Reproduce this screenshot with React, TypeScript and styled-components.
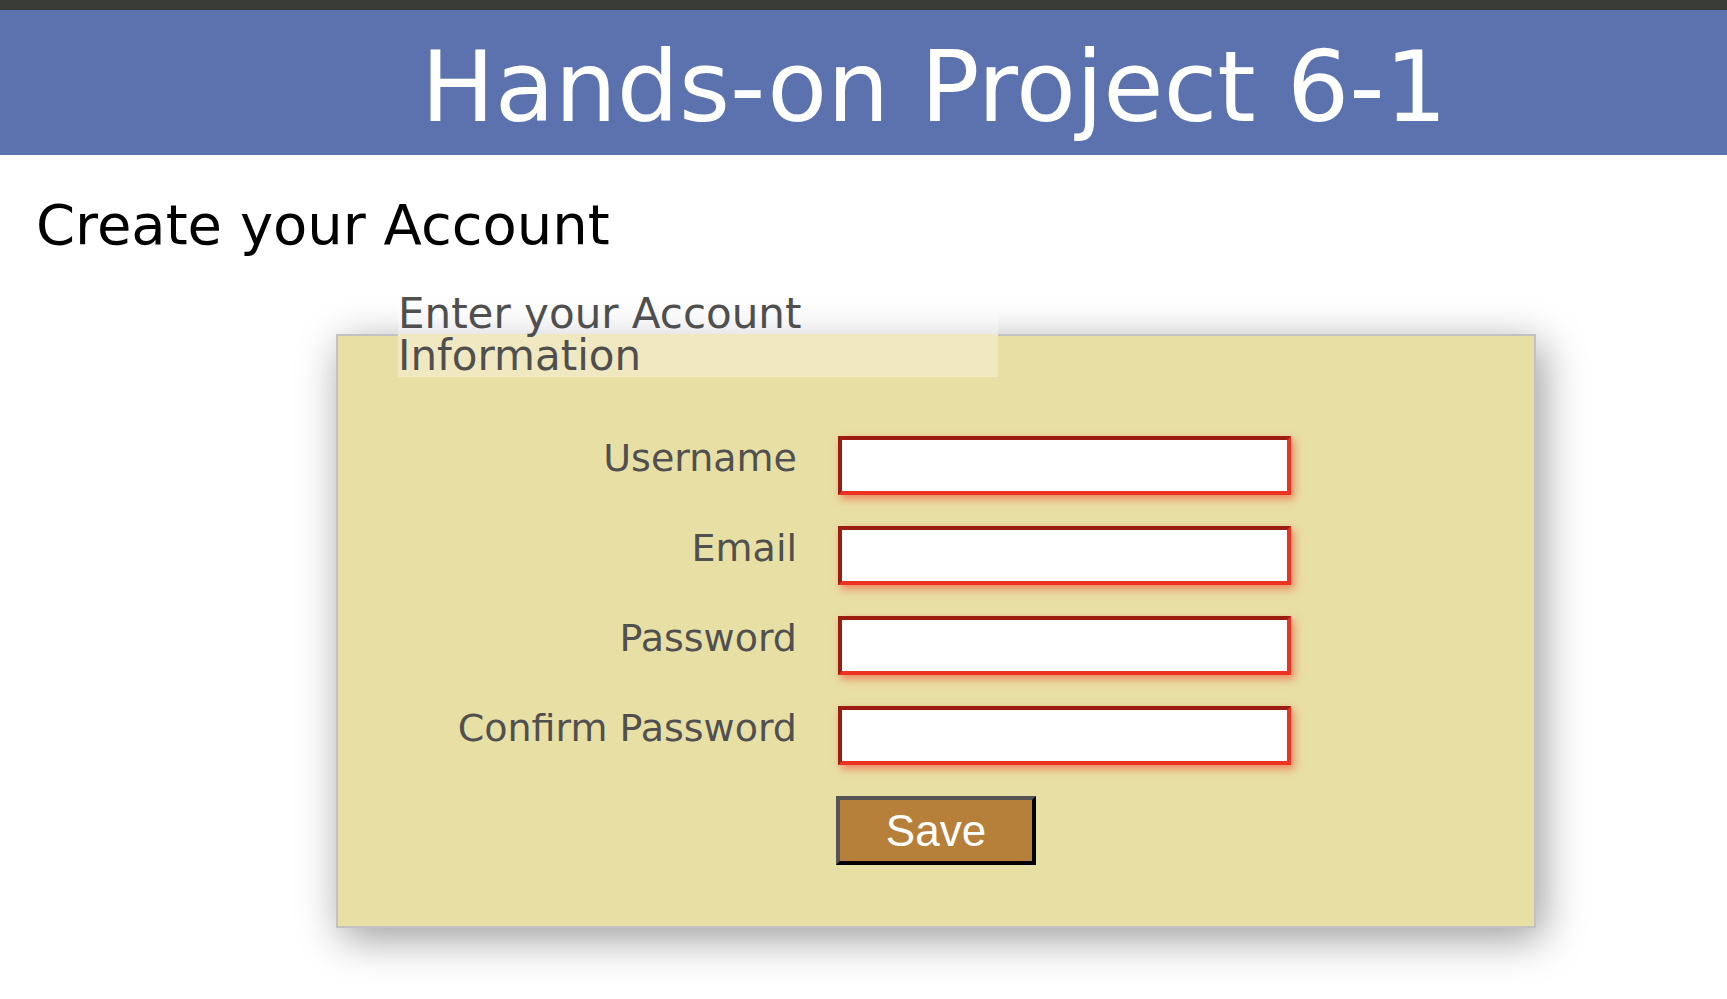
import React from 'react';
import styled, { createGlobalStyle } from 'styled-components';

// Global reset
const GlobalStyle = createGlobalStyle`
  html, body {
    margin: 0;
    padding: 0;
    background: #ffffff;
  }

  body {
    font-family: "DejaVu Sans", Verdana, sans-serif;
  }

  * {
    box-sizing: border-box;
  }
`;

// Styled Components
const TopStrip = styled.div`
  height: 10px;
  background: #393d36;
`;

const Header = styled.header`
  height: 145px;
  background: #5b72ae;
  padding: 21px 0 0 141px;
  text-align: center;
`;

const HeaderTitle = styled.h1`
  margin: 0;
  font-family: "DejaVu Sans", Verdana, sans-serif;
  font-size: 98px;
  font-weight: normal;
  line-height: 112px;
  color: #ffffff;
  white-space: nowrap;
`;

const PageTitle = styled.h2`
  margin: 37px 0 0 0;
  padding-left: 36px;
  font-family: "DejaVu Sans", Verdana, sans-serif;
  font-size: 56px;
  font-weight: normal;
  color: #000000;
`;

const AccountForm = styled.form`
  margin: 36px 0 60px 0;
`;

const FormFieldset = styled.fieldset`
  width: 1200px;
  margin: 0 0 0 336px;
  padding: 0 60px 61px 60px;
  background: #e8dfa5;
  border: 2px solid #c2c2c2;
  box-shadow: 6px 10px 40px rgba(0, 0, 0, 0.4);
`;

const FormLegend = styled.legend`
  width: 600px;
  padding: 0;
  font-family: "DejaVu Sans", Verdana, sans-serif;
  font-size: 42px;
  line-height: 42px;
  color: #4f4f4f;
  background: rgba(255, 255, 255, 0.3);
`;

const FieldGrid = styled.div`
  display: grid;
  grid-template-columns: 399px 453px;
  column-gap: 41px;
  row-gap: 31px;
  margin-top: 59px;
`;

const FieldLabel = styled.label`
  align-self: start;
  text-align: right;
  font-family: "DejaVu Sans", Verdana, sans-serif;
  font-size: 38px;
  line-height: normal;
  color: #505050;
  white-space: nowrap;
`;

const TextInput = styled.input`
  width: 453px;
  height: 59px;
  margin: 0;
  padding: 0 10px;
  background: #ffffff;
  border-style: solid;
  border-width: 4px;
  border-color: #9b1d12 #ec3323 #ec3323 #9b1d12;
  box-shadow: 3px 4px 8px rgba(236, 60, 38, 0.55);
  font-size: 28px;
  outline: none;
`;

const SaveButton = styled.button`
  grid-column: 2;
  justify-self: start;
  width: 200px;
  height: 69px;
  margin-left: -2px;
  padding: 0;
  background: #b6803a;
  border-style: solid;
  border-width: 4px;
  border-color: #555555 #000000 #000000 #555555;
  font-family: "Liberation Sans", Arial, sans-serif;
  font-size: 44px;
  color: #ffffff;
  cursor: pointer;
`;

interface Field {
  id: string;
  label: string;
  type: string;
}

const fields: Field[] = [
  { id: 'username', label: 'Username', type: 'text' },
  { id: 'email', label: 'Email', type: 'email' },
  { id: 'password', label: 'Password', type: 'password' },
  { id: 'confirm', label: 'Confirm Password', type: 'password' },
];

// Component
export default function App() {
  const handleSubmit = (e: React.FormEvent) => {
    e.preventDefault();
  };

  return (
    <>
      <GlobalStyle />
      <TopStrip />
      <Header>
        <HeaderTitle>Hands-on Project 6-1</HeaderTitle>
      </Header>

      <PageTitle>Create your Account</PageTitle>

      <AccountForm onSubmit={handleSubmit}>
        <FormFieldset>
          <FormLegend>Enter your Account Information</FormLegend>
          <FieldGrid>
            {fields.map((field) => (
              <React.Fragment key={field.id}>
                <FieldLabel htmlFor={field.id}>{field.label}</FieldLabel>
                <TextInput id={field.id} name={field.id} type={field.type} />
              </React.Fragment>
            ))}
            <SaveButton type="submit">Save</SaveButton>
          </FieldGrid>
        </FormFieldset>
      </AccountForm>
    </>
  );
}
